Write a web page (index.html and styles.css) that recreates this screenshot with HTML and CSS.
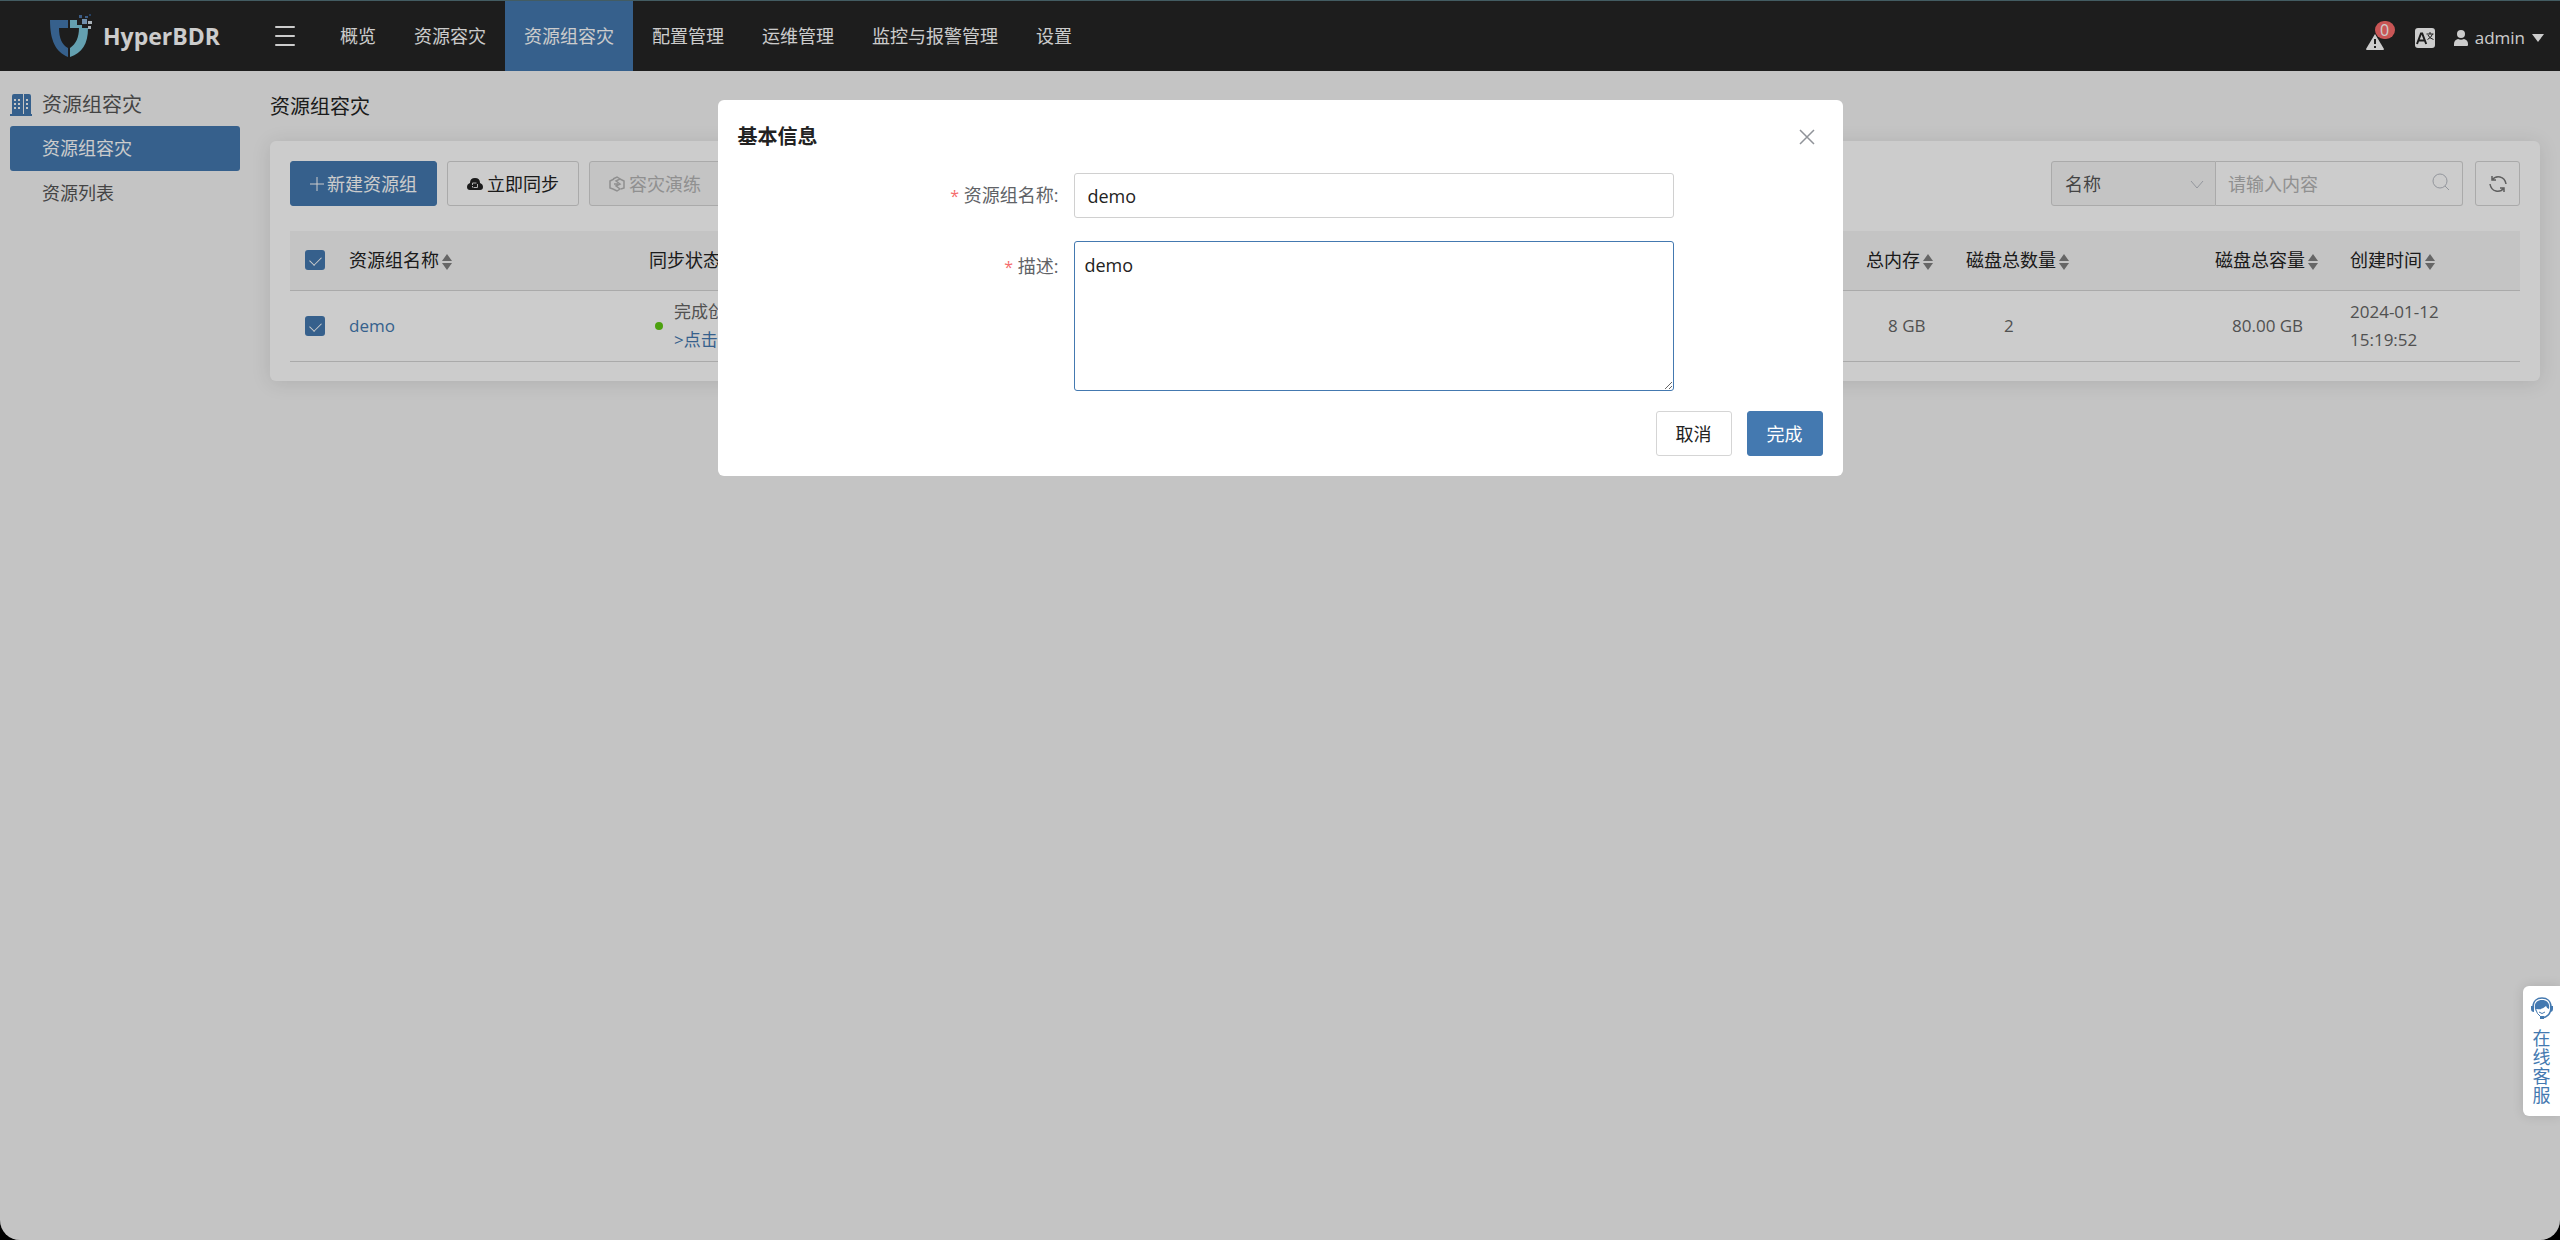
FILE: index.html
```html
<!DOCTYPE html>
<html lang="zh-CN">
<head>
<meta charset="utf-8">
<title>HyperBDR</title>
<link rel="stylesheet" href="styles.css">
</head>
<body>
<div class="app">
  <header class="topbar">
    <a class="brand" href="#">
      <svg class="brand-mark" width="43" height="46" viewBox="0 0 43 46" aria-hidden="true">
        <path fill="#4479b0" d="M0 7h18v8H9c0 10 3 17 9 20v9C6 39 0 28 0 7z"/>
        <path fill="#7ec8dc" d="M20 7h7v5h5v3h6c0 16-6 25-18 29v-9c6-4 9-11 9-20h-9z"/>
        <path fill="#8fb4d8" d="M32 6h5v5h-5z"/>
        <path fill="#d5dfe8" d="M38 8h4v3h-4zM38 13h3v3h-3z"/>
        <path fill="#4a74a8" d="M29 2h3v3h-3zM35 3h3v2h-3z"/>
        <path fill="#2f4f78" d="M39 1h2v2h-2z"/>
      </svg>
      <span>HyperBDR</span>
    </a>
    <button class="menu-toggle" type="button" aria-label="菜单">
      <svg width="20" height="20" viewBox="0 0 20 20"><path d="M1 1h18M1 10h18M1 19h18" stroke="#fff" stroke-width="2" stroke-linecap="round"/></svg>
    </button>
    <nav class="nav">
      <a href="#">概览</a>
      <a href="#">资源容灾</a>
      <a class="active" href="#">资源组容灾</a>
      <a href="#">配置管理</a>
      <a href="#">运维管理</a>
      <a href="#">监控与报警管理</a>
      <a href="#">设置</a>
    </nav>
    <div class="tools">
      <button class="alerts" type="button" aria-label="报警">
        <svg width="18" height="16" viewBox="0 0 18 16"><path fill="#fff" d="M9 0l9 15q0 1-1 1H1q-1 0-1-1z"/><path stroke="#252525" stroke-width="2" d="M9 5v5M9 12v2"/></svg>
        <span class="badge">0</span>
      </button>
      <button class="lang" type="button" aria-label="语言">
        <svg width="20" height="20" viewBox="0 0 20 20"><rect width="20" height="20" rx="3" fill="#fff"/><path d="M2 16L6 5.500h1.200L11.200 16M3.500 12.500h6" fill="none" stroke="#252525" stroke-width="2"/><path d="M11.500 6h7M15 4v2M12.500 11.500q4-2 5-5.500M13 7q1.500 3.500 5.500 4.500" fill="none" stroke="#252525"/></svg>
      </button>
      <button class="user" type="button">
        <svg width="14" height="16" viewBox="0 0 14 16"><circle cx="7" cy="4" r="4" fill="#fff"/><path fill="#fff" d="M0 16v-2q0-4 4-5 3 1.500 6 0 4 1 4 5v1q0 1-1 1z"/></svg>
        <span>admin</span>
        <svg width="12" height="8" viewBox="0 0 12 8"><path fill="#fff" d="M0 0h12L6 8z"/></svg>
      </button>
    </div>
  </header>

  <div class="layout">
    <aside class="sidebar">
      <h2>
        <svg width="22" height="22" viewBox="0 0 22 22" aria-hidden="true"><path fill="#4479b0" d="M2 2q0-2 2-2h9v20H2zM14 0h5q2 0 2 2v18h-7zM0 20h22v2H0z"/><path fill="#f5f5f5" d="M4 5h2v2H4zm4 0h2v2H8zm8 0h2v2h-2zM4 9h2v2H4zm4 0h2v2H8zm8 0h2v2h-2zM4 13h2v2H4zm4 0h2v2H8zm8 0h2v2h-2z"/></svg>
        资源组容灾
      </h2>
      <a class="active" href="#">资源组容灾</a>
      <a href="#">资源列表</a>
    </aside>
    <main class="main">
      <h1>资源组容灾</h1>
      <section class="card">
        <div class="toolbar">
          <button class="btn primary" type="button">
            <svg width="14" height="14" viewBox="0 0 14 14"><path d="M7 0v14M0 7h14" stroke="#fff"/></svg><span>新建资源组</span>
          </button>
          <button class="btn iconic" type="button">
            <svg width="16" height="16" viewBox="0 0 16 16"><path fill="#222" d="M3 7q0-5 5-5t5 5q3 1 3 4 0 3-3 3H3q-3 0-3-3 0-3 3-4z"/><path d="M5.500 9V7h4M10.500 8v3.500h-4M5.500 10v1.500" fill="none" stroke="#ddd"/></svg><span>立即同步</span>
          </button>
          <button class="btn iconic" type="button" disabled>
            <svg width="16" height="16" viewBox="0 0 16 16" fill="none" stroke="#b4b4b4" stroke-width="1.500"><path d="M5 3L1 5v7l3 1M11 3l4 2v7l-3 1M4 3l4-2 3 2-4 2 4 3-4 2 4 3-3 2-4-2M5 8h4"/></svg><span>容灾演练</span>
          </button>
          <div class="filters">
            <div class="picker">
              <select aria-label="筛选字段"><option>名称</option></select>
              <svg width="14" height="8" viewBox="0 0 14 8"><path d="M1 0l6 7 6-7" fill="none" stroke="#b8bcc4"/></svg>
            </div>
            <div class="search">
              <input type="text" aria-label="搜索" placeholder="请输入内容">
              <svg width="18" height="18" viewBox="0 0 18 18"><circle cx="8" cy="8" r="7" fill="none" stroke="#b8bcc4"/><path d="M13 13l4 4" stroke="#b8bcc4"/></svg>
            </div>
            <button class="btn refresh" type="button" aria-label="刷新">
              <svg width="20" height="18" viewBox="0 0 20 18" fill="none" stroke="#777" stroke-width="1.500"><path d="M4 5q3-4 8-3 5 1 6 7M16 13q-3 4-8 3-5-1-6-7M4 1v4h4M16 17v-4h-4"/></svg>
            </button>
          </div>
        </div>
        <table class="grid">
          <colgroup><col class="c-check"><col class="c-name"><col><col class="c-mem"><col class="c-count"><col class="c-size"><col class="c-time"></colgroup>
          <thead>
            <tr>
              <th class="check"><input type="checkbox" aria-label="全选" checked></th>
              <th>资源组名称<i class="sort"></i></th>
              <th>同步状态</th>
              <th>总内存<i class="sort"></i></th>
              <th>磁盘总数量<i class="sort"></i></th>
              <th>磁盘总容量<i class="sort"></i></th>
              <th>创建时间<i class="sort"></i></th>
            </tr>
          </thead>
          <tbody>
            <tr>
              <td class="check"><input type="checkbox" aria-label="demo" checked></td>
              <td><a href="#">demo</a></td>
              <td><div class="status"><i class="dot"></i><div>完成创<br><a href="#">&gt;点击</a></div></div></td>
              <td class="mem">8 GB</td>
              <td class="count">2</td>
              <td class="size">80.00 GB</td>
              <td>2024-01-12<br>15:19:52</td>
            </tr>
          </tbody>
        </table>
      </section>
    </main>
  </div>

  <div class="overlay">
    <form class="modal" role="dialog" aria-labelledby="dlg-title">
      <div class="modal-head">
        <h2 id="dlg-title">基本信息</h2>
        <button class="close" type="button" aria-label="关闭">
          <svg width="16" height="16" viewBox="0 0 16 16"><path d="M1 1l14 14M15 1L1 15" stroke="#909399" stroke-width="1.500"/></svg>
        </button>
      </div>
      <div class="field">
        <label for="name"><b>*</b> 资源组名称:</label>
        <input id="name" type="text" value="demo">
      </div>
      <div class="field">
        <label class="tall" for="desc"><b>*</b> 描述:</label>
        <textarea id="desc" class="focused">demo</textarea>
      </div>
      <div class="modal-foot">
        <button class="btn" type="button">取消</button>
        <button class="btn primary" type="button">完成</button>
      </div>
    </form>
  </div>

  <a class="service" href="#">
    <svg width="22" height="22" viewBox="0 0 22 22" aria-hidden="true"><path d="M2 10C2 4 6 1 11 1s9 3 9 9-3 10-9 11" fill="none" stroke="#4479b0" stroke-width="1.500"/><path fill="#4479b0" d="M4 12C3 6 6 3 11 3s8 3 7 9q-2 0-3-3-4 4-9 3-1 0-1 2zM0 9h3v6q-3 0-3-3zM22 9h-3v6q3 0 3-3zM9 19h4v3H9z"/><path d="M5 13q1 4 4 6M8 15q3 3 6 0" fill="none" stroke="#4479b0"/></svg>
    <span>在线客服</span>
  </a>
</div>
</body>
</html>
```
FILE: styles.css
```css
* { box-sizing: border-box; }
html { background: #000; }
body {
  margin: 0;
  color: #222;
  font: 18px/28px "Open Sans", "Noto Sans CJK SC", sans-serif;
}
button, input, select, textarea { font: inherit; color: inherit; }
button { padding: 0; border: 0; background: none; }
a { color: #4479b0; text-decoration: none; }
h1, h2 { margin: 0; font-size: 20px; font-weight: 400; }
svg { display: block; flex: none; }

.app {
  position: relative;
  display: flex;
  flex-direction: column;
  min-height: 100vh;
  overflow: hidden;
  border-radius: 0 0 20px 20px;
  background: #f5f5f5;
}

/* Top bar */
.topbar {
  display: flex;
  align-items: stretch;
  height: 71px;
  border-top: 1px solid #54737b;
  background: #252525;
  color: #fff;
}
.brand {
  display: flex;
  align-items: center;
  gap: 10px;
  width: 275px;
  padding-left: 50px;
  color: #fff;
  font-size: 23px;
  font-weight: 700;
}
.menu-toggle { width: 20px; margin-right: 26px; }
.nav { display: flex; flex: 1; }
.nav a { padding: 0 19px; color: #fff; line-height: 70px; }
.nav .active { background: #4479b0; }
.tools { display: flex; align-items: center; padding-right: 16px; }
.alerts { position: relative; width: 18px; margin-right: 31px; padding-top: 12px; }
.badge {
  position: absolute;
  left: 9px;
  top: -1px;
  width: 20px;
  border-radius: 9px;
  background: #fb6b6b;
  color: #fff;
  font-size: 16px;
  line-height: 18px;
}
.lang { margin-right: 19px; padding-top: 3px; }
.user { display: flex; align-items: center; gap: 7px; padding-top: 4px; font-size: 17px; }

/* Page layout */
.layout { display: flex; flex: 1; }
.sidebar { width: 250px; padding: 12px 10px; }
.sidebar h2 { display: flex; align-items: center; gap: 10px; height: 43px; color: #555; }
.sidebar a {
  display: block;
  padding-left: 32px;
  border-radius: 3px;
  color: #555;
  line-height: 45px;
}
.sidebar .active { background: #4479b0; color: #fff; }
.main { flex: 1; padding: 22px 20px; }
.main h1 { padding-bottom: 20px; }

.card {
  padding: 20px 20px 19px;
  border-radius: 6px;
  background: #fff;
  box-shadow: 0 2px 20px rgba(0, 0, 0, 0.1);
}
.toolbar { display: flex; gap: 10px; margin-bottom: 25px; }
.btn {
  display: flex;
  align-items: center;
  justify-content: center;
  gap: 3px;
  height: 45px;
  padding: 0 19px;
  border: 1px solid #d5d5d5;
  border-radius: 3px;
  background: #fff;
}
.iconic { gap: 4px; }
.btn.primary { border-color: #4479b0; background: #4479b0; color: #fff; }
.btn:disabled { background: #f5f5f5; color: #b4b4b4; }
.filters { display: flex; margin-left: auto; }
.picker, .search { position: relative; }
.picker svg { position: absolute; right: 12px; top: 20px; }
.search svg { position: absolute; right: 13px; top: 12px; }
.picker select, .search input {
  height: 45px;
  padding: 0 13px;
  border: 1px solid #d5d5d5;
}
.picker select {
  width: 165px;
  border-radius: 3px 0 0 3px;
  appearance: none;
  background: #f5f5f5;
  color: #555;
}
.search input { width: 247px; padding-left: 12px; border-left: 0; border-radius: 0 3px 3px 0; background: #fff; }
.search input::placeholder { color: #b4b4b4; }
.btn.refresh { width: 45px; margin-left: 12px; padding: 0; }

/* Table */
.grid { width: 100%; border-collapse: collapse; table-layout: fixed; }
.c-check { width: 49px; }
.c-name { width: 300px; }
.c-mem { width: 100px; }
.c-count { width: 249px; }
.c-size { width: 135px; }
.c-time { width: 180px; }
.grid th, .grid td {
  padding: 0 0 0 10px;
  border-bottom: 1px solid #d5d5d5;
  text-align: left;
  font-weight: 400;
  white-space: nowrap;
}
.grid th { height: 59px; background: #f5f5f5; }
.grid td { height: 71px; color: #666; font-size: 17px; }
.grid .check { padding-left: 15px; }
.grid .mem { padding-left: 32px; }
.grid .count { padding-left: 48px; }
.grid .size { padding-left: 27px; }
.check input {
  display: block;
  width: 20px;
  height: 20px;
  margin: 0;
  border-radius: 3px;
  appearance: none;
  background: #4479b0;
}
.check input::after {
  content: "";
  display: block;
  width: 6px;
  height: 10px;
  margin: 4px 7px;
  border: solid #fff;
  border-width: 0 1px 1px 0;
  transform: rotate(45deg);
}
.sort { display: inline-block; margin-left: 3px; vertical-align: middle; }
.sort::before, .sort::after { content: ""; display: block; border: 5px solid transparent; }
.sort::before { border-top: 0; border-bottom: 7px solid #808080; margin-bottom: 2px; }
.sort::after { border-bottom: 0; border-top: 7px solid #808080; }
.status { display: flex; align-items: center; gap: 11px; padding-left: 6px; }
.dot { width: 8px; height: 8px; border-radius: 50%; background: #5fc913; }

/* Dialog */
.overlay {
  position: absolute;
  inset: 0;
  display: flex;
  align-items: flex-start;
  justify-content: center;
  padding-top: 100px;
  background: rgba(0, 0, 0, 0.2);
}
.modal {
  width: 1125px;
  padding: 20px;
  border-radius: 6px;
  background: #fff;
}
.modal-head { display: flex; justify-content: space-between; padding: 3px 8px 22px 0; }
.modal-head h2 { font-weight: 700; }
.field { display: flex; margin-bottom: 22px; }
.field label { width: 321px; margin-right: 15px; color: #606266; line-height: 45px; text-align: right; }
.field .tall { line-height: 50px; }
.field label b { color: #f56c6c; font-size: 16px; font-weight: 400; }
.field input, .field textarea {
  width: 600px;
  height: 45px;
  padding: 0 13px;
  border: 1px solid #d0d0d0;
  border-radius: 3px;
  outline: 0;
  background: #fff;
}
.field textarea { height: 150px; padding: 9px 10px; }
.field .focused { border-color: #4479b0; }
.modal-foot { display: flex; justify-content: flex-end; gap: 15px; margin-top: -2px; }

/* Online service tab */
.service {
  position: absolute;
  right: 0;
  bottom: 124px;
  display: flex;
  flex-direction: column;
  align-items: center;
  gap: 10px;
  width: 37px;
  height: 130px;
  padding-top: 11px;
  border-radius: 6px 0 0 6px;
  background: #fff;
  box-shadow: 0 0 12px rgba(0, 0, 0, 0.12);
  line-height: 19px;
}
.service span { width: 18px; word-break: break-all; }
```
